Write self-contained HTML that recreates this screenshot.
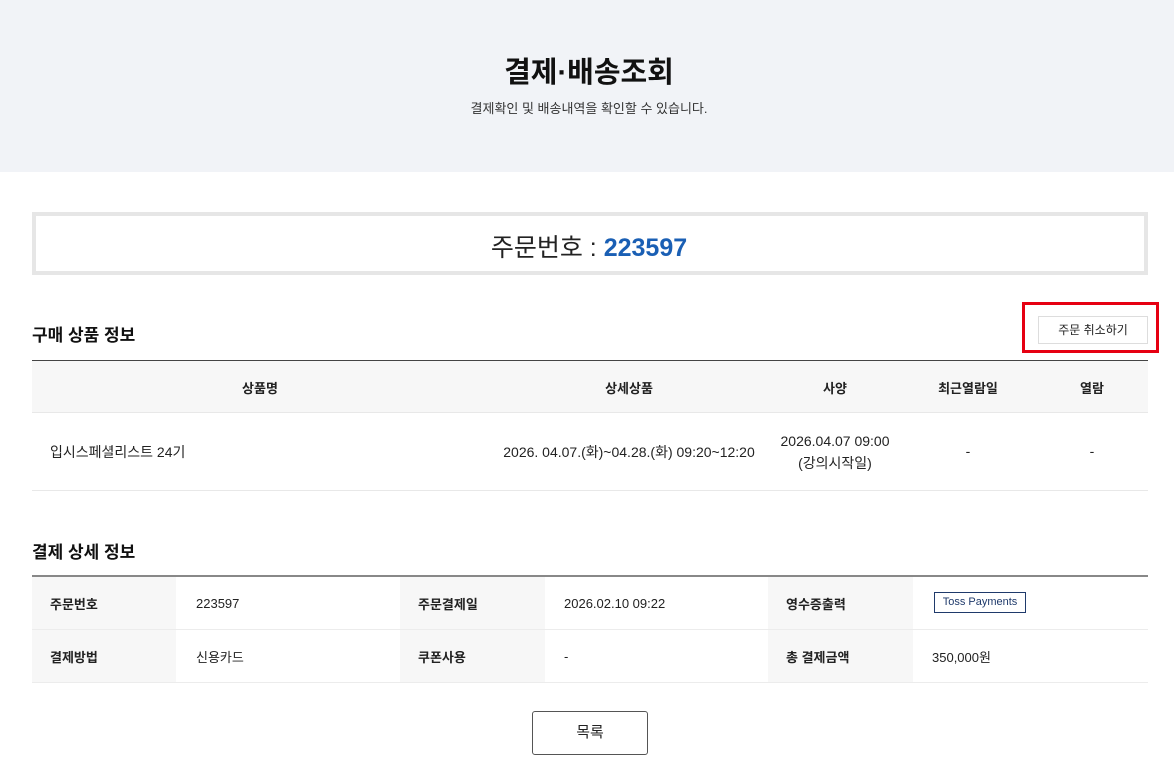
<!DOCTYPE html>
<html><head><meta charset="utf-8"><style>
*{margin:0;padding:0;box-sizing:border-box}
body{width:1174px;height:768px;overflow:hidden;background:#fff;font-family:"Liberation Sans","Noto Sans CJK KR",sans-serif;color:#222;position:relative}
.a{position:absolute}
.c{transform:translateX(-50%);white-space:nowrap}
</style></head><body>
<div class="a" style="left:0;top:0;width:1174px;height:172px;background:#f1f3f7"></div>
<div class="a c" style="left:589px;top:49px;font-size:29px;font-weight:bold;color:#111">결제·배송조회</div>
<div class="a c" style="left:589px;top:98px;font-size:13px;color:#333">결제확인 및 배송내역을 확인할 수 있습니다.</div>

<div class="a" style="left:32px;top:212px;width:1116px;height:63px;border:4px solid #e6e6e6"></div>
<div class="a c" style="left:589px;top:228px;font-size:25px;color:#222">주문번호 : <b style="color:#1a5fb4">223597</b></div>

<div class="a" style="left:32px;top:321px;font-size:17px;font-weight:bold;color:#111">구매 상품 정보</div>
<div class="a" style="left:1022px;top:302px;width:137px;height:51px;border:3px solid #e60012"></div>
<div class="a" style="left:1038px;top:316px;width:110px;height:28px;border:1px solid #ddd;font-size:12px;text-align:center;line-height:26px">주문 취소하기</div>

<div class="a" style="left:32px;top:360px;width:1116px;height:1px;background:#444"></div>
<div class="a" style="left:32px;top:361px;width:1116px;height:52px;background:#f7f7f7;border-bottom:1px solid #e8e8e8"></div>
<div class="a c" style="left:260px;top:378px;font-size:13px;font-weight:bold">상품명</div>
<div class="a c" style="left:629px;top:378px;font-size:13px;font-weight:bold">상세상품</div>
<div class="a c" style="left:835px;top:378px;font-size:13px;font-weight:bold">사양</div>
<div class="a c" style="left:968px;top:378px;font-size:13px;font-weight:bold">최근열람일</div>
<div class="a c" style="left:1092px;top:378px;font-size:13px;font-weight:bold">열람</div>
<div class="a" style="left:50px;top:442px;font-size:14px">입시스페셜리스트 24기</div>
<div class="a c" style="left:629px;top:442px;font-size:14px">2026. 04.07.(화)~04.28.(화) 09:20~12:20</div>
<div class="a c" style="left:835px;top:430px;font-size:14px;text-align:center;line-height:22px">2026.04.07 09:00<br>(강의시작일)</div>
<div class="a c" style="left:968px;top:443px;font-size:14px">-</div>
<div class="a c" style="left:1092px;top:443px;font-size:14px">-</div>
<div class="a" style="left:32px;top:490px;width:1116px;height:1px;background:#e8e8e8"></div>

<div class="a" style="left:32px;top:538px;font-size:17px;font-weight:bold;color:#111">결제 상세 정보</div>
<div class="a" style="left:32px;top:575px;width:1116px;height:2px;background:#888"></div>
<div class="a" style="left:32px;top:577px;width:144px;height:105px;background:#f7f7f7"></div>
<div class="a" style="left:400px;top:577px;width:145px;height:105px;background:#f7f7f7"></div>
<div class="a" style="left:768px;top:577px;width:145px;height:105px;background:#f7f7f7"></div>
<div class="a" style="left:32px;top:629px;width:1116px;height:1px;background:#ececec"></div>
<div class="a" style="left:32px;top:682px;width:1116px;height:1px;background:#ececec"></div>
<div class="a" style="left:50px;top:594px;font-size:13px;font-weight:bold">주문번호</div>
<div class="a" style="left:196px;top:596px;font-size:13px">223597</div>
<div class="a" style="left:418px;top:594px;font-size:13px;font-weight:bold">주문결제일</div>
<div class="a" style="left:564px;top:596px;font-size:13px">2026.02.10 09:22</div>
<div class="a" style="left:786px;top:594px;font-size:13px;font-weight:bold">영수증출력</div>
<div class="a" style="left:934px;top:592px;width:92px;height:21px;border:1px solid #1f3a6b;font-size:11px;text-align:center;line-height:19px;color:#1f3a6b">Toss Payments</div>
<div class="a" style="left:50px;top:647px;font-size:13px;font-weight:bold">결제방법</div>
<div class="a" style="left:196px;top:647px;font-size:13px">신용카드</div>
<div class="a" style="left:418px;top:647px;font-size:13px;font-weight:bold">쿠폰사용</div>
<div class="a" style="left:564px;top:649px;font-size:13px">-</div>
<div class="a" style="left:786px;top:647px;font-size:13px;font-weight:bold">총 결제금액</div>
<div class="a" style="left:932px;top:647px;font-size:13px">350,000원</div>

<div class="a" style="left:532px;top:711px;width:116px;height:44px;border:1px solid #555;border-radius:3px;font-size:15px;text-align:center;line-height:42px">목록</div>
</body></html>
